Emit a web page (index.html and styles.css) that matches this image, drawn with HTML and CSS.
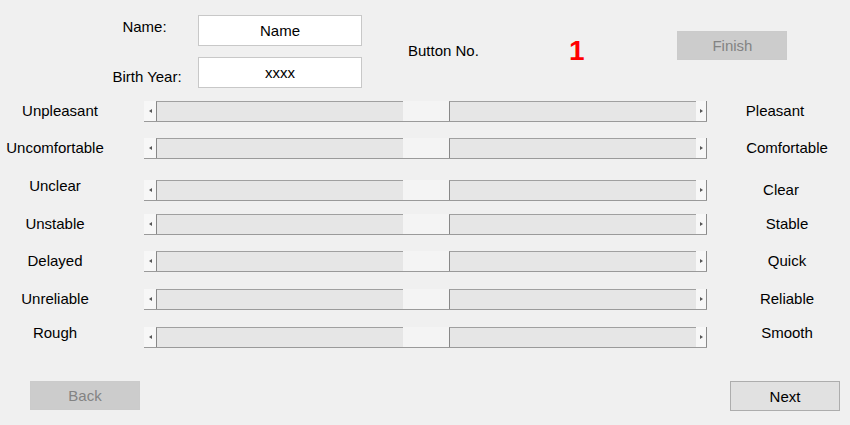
FILE: index.html
```html
<!DOCTYPE html>
<html lang="en">
<head>
    <meta charset="UTF-8">
    <title>Rating</title>
    <link rel="stylesheet" href="styles.css">
</head>
<body>
    <div class="header">
        <div class="person">
            <label class="label label-top">Name:</label>
            <div class="field">Name</div>
            <label class="label label-bottom">Birth Year:</label>
            <div class="field">xxxx</div>
        </div>
        <div class="button-no">Button No.</div>
        <div class="number">1</div>
        <button class="btn btn-disabled finish">Finish</button>
    </div>

    <div class="scales">
        <div class="row">
            <div class="left nudge-right">Unpleasant</div>
            <div class="slider"><span class="arrow arrow-l"></span><span class="trough"></span><span class="thumb"></span><span class="trough"></span><span class="arrow arrow-r"></span></div>
            <div class="right nudge-left">Pleasant</div>
        </div>
        <div class="row">
            <div class="left">Uncomfortable</div>
            <div class="slider"><span class="arrow arrow-l"></span><span class="trough"></span><span class="thumb"></span><span class="trough"></span><span class="arrow arrow-r"></span></div>
            <div class="right">Comfortable</div>
        </div>
        <div class="row">
            <div class="left high">Unclear</div>
            <div class="slider"><span class="arrow arrow-l"></span><span class="trough"></span><span class="thumb"></span><span class="trough"></span><span class="arrow arrow-r"></span></div>
            <div class="right nudge-left-small">Clear</div>
        </div>
        <div class="row">
            <div class="left">Unstable</div>
            <div class="slider"><span class="arrow arrow-l"></span><span class="trough"></span><span class="thumb"></span><span class="trough"></span><span class="arrow arrow-r"></span></div>
            <div class="right">Stable</div>
        </div>
        <div class="row">
            <div class="left">Delayed</div>
            <div class="slider"><span class="arrow arrow-l"></span><span class="trough"></span><span class="thumb"></span><span class="trough"></span><span class="arrow arrow-r"></span></div>
            <div class="right">Quick</div>
        </div>
        <div class="row">
            <div class="left">Unreliable</div>
            <div class="slider"><span class="arrow arrow-l"></span><span class="trough"></span><span class="thumb"></span><span class="trough"></span><span class="arrow arrow-r"></span></div>
            <div class="right">Reliable</div>
        </div>
        <div class="row">
            <div class="left high">Rough</div>
            <div class="slider"><span class="arrow arrow-l"></span><span class="trough"></span><span class="thumb"></span><span class="trough"></span><span class="arrow arrow-r"></span></div>
            <div class="right high">Smooth</div>
        </div>
    </div>

    <div class="footer">
        <button class="btn btn-disabled">Back</button>
        <button class="btn">Next</button>
    </div>
</body>
</html>
```

FILE: styles.css
```css
body {
    margin: 0;
    width: 850px;
    height: 425px;
    background-color: #f0f0f0;
    color: #000;
    font-family: 'Liberation Sans', Arial, sans-serif;
    font-size: 15px;
    line-height: 17px;
    overflow: hidden;
}

/* Kopfbereich mit Name / Geburtsjahr */
.header {
    display: flex;
    align-items: flex-start;
    height: 101px;
    box-sizing: border-box;
    padding: 15px 0 0 100px;
}
.person {
    display: grid;
    grid-template-columns: 94px 164px;
    grid-template-rows: 31px 31px;
    column-gap: 4px;
    row-gap: 11px;
}
.label {
    text-align: center;
}
.label-top {
    align-self: start;
    padding: 3px 5px 0 0;
}
.label-bottom {
    align-self: end;
    padding-bottom: 3px;
}
.field {
    background-color: #fff;
    border: 1px solid #c8c8c8;
    text-align: center;
    line-height: 29px;
}
.button-no {
    margin: 27px 0 0 46px;
}
.number {
    margin: 22px 0 0 90px;
    color: #f00;
    font-size: 28px;
    font-weight: bold;
    line-height: 28px;
}
.finish {
    margin: 16px 0 0 93px;
}

.btn {
    width: 110px;
    height: 30px;
    padding: 0;
    font-family: inherit;
    font-size: 15px;
    color: #000;
    background-color: #e1e1e1;
    border: 1px solid #adadad;
}
.btn-disabled {
    height: 29px;
    color: #838383;
    background-color: #cccccc;
    border: 1px solid #cbcbcb;
}

/* Schieberegler - Zeilenabstände wie im Original-GUI */
.scales {
    display: grid;
    grid-template-rows: 37px 42px 34px 37px 38px 38px 21px;
}
.row {
    display: flex;
    align-items: center;
    height: 21px;
}
.left {
    width: 110px;
    margin: 0 34px 2px 0;
    text-align: center;
    white-space: nowrap;
}
.right {
    flex: 1;
    margin-bottom: 2px;
    padding-left: 17px;
    text-align: center;
}
.high {
    margin-bottom: 10px;
}
.nudge-right {
    box-sizing: border-box;
    padding-left: 10px;
}
.nudge-left {
    padding-right: 24px;
}
.nudge-left-small {
    padding-right: 12px;
}
.slider {
    display: flex;
    width: 563px;
    height: 21px;
    box-sizing: border-box;
    border-bottom: 1px solid #9a9a9a;
}
.arrow {
    position: relative;
    background-color: #f7f7f7;
}
.arrow-l {
    width: 12px;
}
.arrow-r {
    width: 10px;
    border-right: 1px solid #8a8a8a;
}
.arrow::before {
    content: '';
    position: absolute;
    top: 8px;
    border-top: 2px solid transparent;
    border-bottom: 2px solid transparent;
}
.arrow-l::before {
    left: 5px;
    border-right: 3px solid #555;
}
.arrow-r::before {
    left: 4px;
    border-left: 3px solid #555;
}
.trough {
    flex: 1;
    background-color: #e6e6e6;
    border-top: 1px solid #a0a0a0;
    border-left: 1px solid #888;
}
.thumb {
    width: 46px;
    background-color: #f4f4f4;
}

.footer {
    display: flex;
    justify-content: space-between;
    align-items: flex-start;
    margin-top: 33px;
    padding: 0 10px 0 30px;
}
```
